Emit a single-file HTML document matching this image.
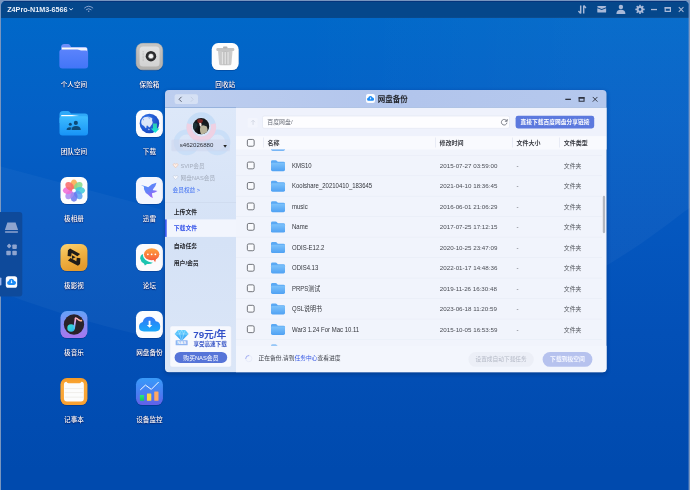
<!DOCTYPE html>
<html lang="zh-CN">
<head>
<meta charset="utf-8">
<title>Z4Pro-N1M3-6566</title>
<style>
*{box-sizing:border-box;margin:0;padding:0}
html,body{width:690px;height:490px;overflow:hidden;background:#7895bf;}
body{font-family:"Liberation Sans","Noto Sans CJK SC",sans-serif;font-size:6px;color:#333;position:relative}
#bg{position:absolute;left:1px;top:1px;width:688px;height:489px;border-radius:5px 5px 0 0;overflow:hidden;
 background:linear-gradient(180deg,#0068c9 3%,#0460c6 24%,#0457bf 46%,#0350b7 68%,#004aae 96%);}
#bg:after{content:'';position:absolute;left:0;right:0;bottom:0;height:.5px;background:rgba(120,150,200,.55)}
#bg:before{content:'';position:absolute;right:0;top:0;bottom:0;width:1px;background:rgba(120,150,200,.4);z-index:2}
#topbar{position:absolute;left:0;top:0;width:100%;height:16.5px;background:#05478b;border-top:.6px solid #06357c}
#shapes{position:absolute;left:0;top:0}
.t{position:absolute;white-space:nowrap;line-height:16px;height:16px}
#host{font-size:14.4px;font-weight:bold;color:#eaf0fa}
.lb{font-size:13.2px;font-weight:500;color:#fff;text-align:center;width:160px;text-shadow:0 0 2px rgba(0,20,90,.9),0 1px 2px rgba(0,20,90,.7)}
.hd{font-weight:bold;color:#3a3c43;font-size:12px}
.cell{color:#4a4d55;font-size:12.4px}
.nm{color:#33353b;font-size:12.6px;transform-origin:0 50%;transform:scaleX(.95)}
.ty{color:#55585f;font-size:11.8px}
.menu{font-weight:bold;color:#26282e;font-size:11.7px}

#txt{position:absolute;left:0;top:0;width:1380px;height:980px;transform:scale(.5);transform-origin:0 0}
</style>
</head>
<body>
<div id="bg"><div id="topbar"></div></div>
<svg id="shapes" width="690" height="490" viewBox="0 0 690 490">
<defs><filter id="blur1" x="-20%" y="-20%" width="140%" height="140%"><feGaussianBlur stdDeviation=".7"/></filter><filter id="blur4" x="-10%" y="-10%" width="120%" height="125%"><feGaussianBlur stdDeviation="2.2"/></filter></defs>
<path d="M-5 165 L165 210.5 L430 262 L430 338.4 L415 341.7 L400 344.5 L385 347.0 L370 349.0 L355 350.6 L340 351.9 L325 352.7 L310 353.2 L295 353.3 L280 353.1 L265 352.5 L250 351.5 L235 350.2 L220 348.6 L205 346.7 L190 344.4 L175 341.9 L160 339.0 L145 335.9 L130 332.4 L115 328.7 L100 324.8 L85 320.5 L70 316.0 L55 311.3 L40 306.3 L25 301.2 L10 295.7 L-5 290.1 Z" fill="#fff" opacity=".035"/>
<linearGradient id="bandg" gradientUnits="userSpaceOnUse" x1="300" y1="0" x2="600" y2="0"><stop offset="0" stop-color="#fff" stop-opacity="0"/><stop offset="1" stop-color="#fff" stop-opacity=".035"/></linearGradient>
<path d="M295 17 L695 17 L695 205 L685 211.0 L670 222.6 L655 233.6 L640 244.2 L625 254.1 L610 263.6 L595 272.5 L580 280.9 L565 288.8 L550 296.2 L535 303.1 L520 309.6 L505 315.5 L490 321.0 L475 326.0 L460 330.6 L445 334.7 L430 338.4 L415 341.7 L400 344.5 L385 347.0 L370 349.0 L355 350.6 L340 351.9 L325 352.7 L310 353.2 L295 353.3 Z" fill="url(#bandg)"/>
<g transform="translate(68.60 7.20) scale(0.5)"><path d="M1.5 2 L5 5.8 L8.5 2" fill="none" stroke="#dfe7f5" stroke-width="1.8"/></g>
<g transform="translate(84.00 5.30) scale(0.47)"><g fill="none" stroke="#8ea6d2" stroke-width="2" stroke-linecap="round"><path d="M1.2 5.6 Q10 -2 18.8 5.6"/><path d="M4.8 9.2 Q10 4.6 15.2 9.2"/></g><circle cx="10" cy="12.6" r="1.6" fill="#8ea6d2"/></g>
<g transform="translate(577.70 5.00) scale(0.5)"><g fill="none" stroke="#a9b9d8" stroke-width="2.9"><path d="M6 1 V17 M1.5 12 L6 17"/><path d="M12 17 V1 M12 1 L16.5 6"/></g></g>
<g transform="translate(597.30 6.00) scale(0.5)"><path transform="scale(.93 .82)" d="M0 1.5 Q0 0 1.5 0 H17.5 Q19 0 19 1.5 V3 L9.5 7.5 L0 3 Z M0 5.6 L9.5 10 L19 5.6 V14.5 Q19 16 17.5 16 H1.5 Q0 16 0 14.5 Z" fill="#a9b9d8"/></g>
<g transform="translate(616.40 4.70) scale(0.5)"><circle cx="9" cy="4.6" r="4.4" fill="#a9b9d8"/><path d="M0 18.4 Q0 10 9 10 Q18 10 18 18.4 Z" fill="#a9b9d8"/></g>
<g transform="translate(635.30 4.70) scale(0.47)"><g fill="#a9b9d8"><rect x="8.3" y="0" width="3.4" height="20" rx=".8" transform="rotate(0 10 10)"/><rect x="8.3" y="0" width="3.4" height="20" rx=".8" transform="rotate(45 10 10)"/><rect x="8.3" y="0" width="3.4" height="20" rx=".8" transform="rotate(90 10 10)"/><rect x="8.3" y="0" width="3.4" height="20" rx=".8" transform="rotate(135 10 10)"/><circle cx="10" cy="10" r="7"/></g><circle cx="10" cy="10" r="2.8" fill="#05478b"/></g>
<rect x="651" y="8.9" width="6" height="1.3" rx="0" fill="#a9b9d8" />
<path d="M665.2 7.9 H670.4 V11.3 H665.2 Z" fill="none" stroke="#a9b9d8" stroke-width="1.2"/><rect x="664.6" y="7" width="6.4" height="1.5" fill="#a9b9d8"/>
<g transform="translate(678.30 6.60) scale(0.47)"><path d="M1 1 L11 11 M11 1 L1 11" stroke="#a9b9d8" stroke-width="2.2"/></g>
<g transform="translate(59.35 44.10) scale(0.5)"><defs><linearGradient id="pf1" x1="0" y1="0" x2="0" y2="1"><stop offset="0" stop-color="#5b83fc"/><stop offset="1" stop-color="#4275f7"/></linearGradient>
<linearGradient id="pf2" x1="0" y1="0" x2="1" y2="0"><stop offset="0" stop-color="#fffdf2"/><stop offset="1" stop-color="#eaf0ff"/></linearGradient></defs>
<path d="M3.3 7 Q3.3 0 10 0 H17 Q20 0 21.5 2.5 L23.5 6 H51 Q56.5 6 56.5 11.5 V24 H3.3 Z" fill="#6d8ef9"/>
<path d="M5 7 H53 Q55.6 7 55.6 10 V22 H5 Z" fill="url(#pf2)"/>
<path d="M0 16 Q0 10.7 5 10.7 H36 Q38.5 10.7 40 11.8 Q41.2 12.7 43.5 12.7 H53 Q57.5 12.7 57.5 17 V43 Q57.5 48.8 51.5 48.8 H6 Q0 48.8 0 43 Z" fill="url(#pf1)"/></g>
<rect x="135.95" y="43.80" width="27" height="27" rx="6.5" fill="#00154a" opacity=".35" filter="url(#blur1)"/>
<g transform="translate(135.95 43.10) scale(0.5)"><defs><linearGradient id="sf1" x1="0" y1="0" x2="0" y2="1"><stop offset="0" stop-color="#c7c6c4"/><stop offset="1" stop-color="#b2b0ad"/></linearGradient>
<linearGradient id="sf2" x1="0" y1="0" x2="0" y2="1"><stop offset="0" stop-color="#e2e2e2"/><stop offset="1" stop-color="#d2d2d2"/></linearGradient></defs>
<rect x="0.5" y="0.5" width="53" height="53" rx="13" fill="url(#sf1)" stroke="#cdbfae" stroke-width="1"/>
<rect x="7.2" y="6.6" width="40" height="40" rx="7" fill="url(#sf2)"/>
<path d="M14.4 16.3 V36.6" stroke="#a6a6a6" stroke-width="1.4" stroke-dasharray="1.6 1.4"/>
<circle cx="30" cy="26.1" r="10.5" fill="#2b2b2d"/><circle cx="30" cy="26.1" r="5.4" fill="#9a9a9a"/><circle cx="30" cy="26.1" r="4.2" fill="#f6f6f6"/></g>
<rect x="211.70" y="43.80" width="27" height="27" rx="6.5" fill="#00154a" opacity=".35" filter="url(#blur1)"/>
<g transform="translate(211.70 43.10) scale(0.5)"><defs><linearGradient id="tr1" x1="0" y1="0" x2="1" y2="0"><stop offset="0" stop-color="#cfcfcf"/><stop offset=".5" stop-color="#bdbdbd"/><stop offset="1" stop-color="#cfcfcf"/></linearGradient></defs>
<rect x="0" y="0" width="54" height="54" rx="13" fill="#fdfdfd"/>
<path d="M12.4 15 H41.8 L39.4 42 Q39.1 44.4 36.6 44.4 H17.6 Q15.2 44.4 14.9 42 Z" fill="url(#tr1)"/>
<path d="M21.5 18 V42.5 M27.1 18 V42.5 M32.7 18 V42.5" stroke="#e2e2e2" stroke-width="2.6"/>
<rect x="9.2" y="9.8" width="36" height="6" rx="2.6" fill="#c4c4c4"/>
<rect x="22.6" y="6.8" width="9" height="4" rx="1.8" fill="#b4b4b4"/></g>
<g transform="translate(59.50 110.95) scale(0.5)"><defs><linearGradient id="tf1" x1="0" y1="0" x2="0" y2="1"><stop offset="0" stop-color="#3dbcff"/><stop offset="1" stop-color="#1793f6"/></linearGradient>
<linearGradient id="tf2" x1="0" y1="0" x2="1" y2="0"><stop offset="0" stop-color="#ffffff"/><stop offset=".6" stop-color="#ffffff"/><stop offset="1" stop-color="#ffffff" stop-opacity="0"/></linearGradient></defs>
<path d="M0 7 Q0 0 7 0 H16 Q19 0 20.5 2 L23 5.2 H51 Q57 5.2 57 11 V24 H0 Z" fill="#2fa9f8"/>
<rect x="3.3" y="8" width="36" height="3.4" rx="1" fill="url(#tf2)"/>
<path d="M0 15 Q0 10.6 4.5 10.6 H52.5 Q57 10.6 57 15 V43 Q57 49 51 49 H6 Q0 49 0 43 Z" fill="url(#tf1)"/>
<g fill="#0d4a78"><circle cx="32.7" cy="23.9" r="4.1"/><path d="M24 38 Q24 30 33 30 Q42.5 30 42.5 38 Z"/>
<circle cx="21.6" cy="26.8" r="3"/><path d="M14.2 38 Q14.2 32.4 20.5 32.4 Q23.3 32.4 24.6 33.4 Q22 35.3 22 38 Z"/></g></g>
<rect x="135.95" y="110.80" width="27" height="27" rx="6.5" fill="#00154a" opacity=".35" filter="url(#blur1)"/>
<g transform="translate(135.95 110.10) scale(0.5)"><defs><radialGradient id="dl1" cx=".35" cy=".35" r=".75"><stop offset="0" stop-color="#3f7ff0"/><stop offset=".6" stop-color="#2058d2"/><stop offset="1" stop-color="#1644b8"/></radialGradient>
<linearGradient id="dl2" x1="0" y1="0" x2="0" y2="1"><stop offset="0" stop-color="#2ec8ac"/><stop offset="1" stop-color="#10e8de"/></linearGradient></defs>
<rect x="0" y="0" width="54" height="54" rx="13" fill="#fbfcff"/>
<circle cx="27" cy="26.7" r="19.6" fill="url(#dl1)"/>
<path d="M10.5 25 Q10.5 18 16.5 14.5 Q21 12.5 26 13.5 Q31 14 33 17.5 Q31 19.5 32.8 22.5 Q34.5 25.5 32.2 28.5 Q30.5 30 29 33 Q27.3 35.8 25.5 33.8 Q24.5 30.5 21.8 30.8 Q20.3 33 21 35.5 Q19.3 37 18 34.5 Q16.5 31 13.5 30.5 Q10.8 28.8 10.5 25 Z" fill="#eef3fb" opacity=".9"/>
<path d="M14 17 Q17 18 16 21 Q13 21 14 17 Z M23 13.5 Q26 15.5 29.5 14 L28 17 Q25 17.5 23 13.5 Z" fill="#3a74e4" opacity=".55"/>
<path d="M24 37.5 Q26 36.5 27.5 38.5 Q27 41 25 40 Z" fill="#e8eef9" opacity=".8"/>
<path d="M34 27 H42 V36.9 H47.3 L38.4 45.7 L29.7 36.9 H34 Z" fill="url(#dl2)"/></g>
<rect x="60.45" y="177.80" width="27" height="27" rx="6.5" fill="#00154a" opacity=".35" filter="url(#blur1)"/>
<g transform="translate(60.45 177.10) scale(0.5)"><rect x="0" y="0" width="54" height="54" rx="13" fill="#fdfdfd"/><ellipse cx="27" cy="15" rx="7.1" ry="10.2" fill="#f9a94a" opacity=".86" transform="rotate(0 27 27)"/><ellipse cx="27" cy="15" rx="7.1" ry="10.2" fill="#84d98a" opacity=".86" transform="rotate(45 27 27)"/><ellipse cx="27" cy="15" rx="7.1" ry="10.2" fill="#3ecbd8" opacity=".86" transform="rotate(90 27 27)"/><ellipse cx="27" cy="15" rx="7.1" ry="10.2" fill="#58a2f2" opacity=".86" transform="rotate(135 27 27)"/><ellipse cx="27" cy="15" rx="7.1" ry="10.2" fill="#6a78f0" opacity=".86" transform="rotate(180 27 27)"/><ellipse cx="27" cy="15" rx="7.1" ry="10.2" fill="#a98af0" opacity=".86" transform="rotate(225 27 27)"/><ellipse cx="27" cy="15" rx="7.1" ry="10.2" fill="#f06ad6" opacity=".86" transform="rotate(270 27 27)"/><ellipse cx="27" cy="15" rx="7.1" ry="10.2" fill="#f86a68" opacity=".86" transform="rotate(315 27 27)"/><circle cx="27" cy="27" r="3.8" fill="#fff" opacity=".95"/></g>
<rect x="135.95" y="177.80" width="27" height="27" rx="6.5" fill="#00154a" opacity=".35" filter="url(#blur1)"/>
<g transform="translate(135.95 177.10) scale(0.5)"><defs><linearGradient id="xl1" x1="0.1" y1="0" x2=".8" y2="1"><stop offset="0" stop-color="#4a90fa"/><stop offset=".55" stop-color="#6880f8"/><stop offset="1" stop-color="#b05cf8"/></linearGradient></defs>
<rect x="0" y="0" width="54" height="54" rx="13" fill="#f4f6fe"/>
<path d="M10 16 L17.5 17.8 Q21 18.6 24.4 20.3 Q31 13.5 41 11.5 Q40 18 34.5 24 Q33.5 25.5 33.8 26.5 Q38 26.3 43 28 Q38 31.8 32 32.2 Q32.3 37 34 42 Q27.5 39.5 24 35 Q18.5 32.5 16.3 25 Q15.5 21.5 16.3 19.5 Z" fill="url(#xl1)"/></g>
<rect x="60.45" y="244.80" width="27" height="27" rx="6.5" fill="#00154a" opacity=".35" filter="url(#blur1)"/>
<g transform="translate(60.45 244.10) scale(0.5)"><defs><linearGradient id="vd1" x1="0" y1="0" x2=".35" y2="1"><stop offset="0" stop-color="#fad374"/><stop offset=".5" stop-color="#f1b445"/><stop offset="1" stop-color="#e59c2e"/></linearGradient></defs>
<rect x="0" y="0" width="54" height="54" rx="13" fill="url(#vd1)"/>
<g fill="#1f1c1a">
<path d="M15 12.4 L19.2 9 L39.2 19.6 L34 24.2 L22.4 18 L21.5 25 L14.3 23.8 Z"/>
<path d="M39.2 39.8 L35 43.2 L15 32.6 L20.2 28 L31.8 34.2 L32.7 27.2 L39.9 28.4 Z"/>
<path d="M23.1 22.2 L30.3 26.1 L23.1 30 Z"/>
</g></g>
<rect x="135.95" y="244.80" width="27" height="27" rx="6.5" fill="#00154a" opacity=".35" filter="url(#blur1)"/>
<g transform="translate(135.95 244.10) scale(0.5)"><defs><linearGradient id="fr1" x1="0" y1="0" x2="0" y2="1"><stop offset="0" stop-color="#ffa23e"/><stop offset="1" stop-color="#f75f3c"/></linearGradient></defs>
<rect x="0" y="0" width="54" height="54" rx="13" fill="#fbfbfd"/>
<path d="M13.3 19.6 Q7.6 23.5 8.6 29.5 Q9.8 36.5 16 38.6 L17.9 42.8 L22.2 39.6 Q28.5 40.4 34 37.4 Q29 37.2 24.5 35 Q17.5 31.5 15.6 27.5 Q14 24.5 14 21.2 Z" fill="#1cc4b0"/>
<ellipse cx="31.4" cy="20.3" rx="15.4" ry="11.8" fill="url(#fr1)"/>
<path d="M34.5 30.5 L38.4 36.2 L40.6 28.5 Z" fill="#f8633c"/>
<circle cx="23.8" cy="20.5" r="1.8" fill="#fff"/><circle cx="31.4" cy="20.5" r="1.8" fill="#fff"/><circle cx="38.8" cy="20.5" r="1.8" fill="#fff"/></g>
<rect x="60.45" y="311.80" width="27" height="27" rx="6.5" fill="#00154a" opacity=".35" filter="url(#blur1)"/>
<g transform="translate(60.45 311.10) scale(0.5)"><defs><linearGradient id="ms1" x1="0" y1="0" x2="0" y2="1"><stop offset="0" stop-color="#64a2f8"/><stop offset="1" stop-color="#a976ee"/></linearGradient>
<linearGradient id="ms2" x1="0" y1="1" x2="0" y2="0"><stop offset="0" stop-color="#48c4f4"/><stop offset=".5" stop-color="#c0a4f8"/><stop offset="1" stop-color="#ffb0c4"/></linearGradient>
<linearGradient id="ms3" x1="0" y1="0" x2="1" y2="0"><stop offset="0" stop-color="#ffb0c4"/><stop offset="1" stop-color="#ffb48e"/></linearGradient>
<linearGradient id="ms4" x1="0" y1="0" x2="1" y2="1"><stop offset="0" stop-color="#36e8cc"/><stop offset="1" stop-color="#2cb0f4"/></linearGradient></defs>
<rect x="0" y="0" width="54" height="54" rx="13" fill="url(#ms1)"/>
<circle cx="27.1" cy="26.8" r="20.3" fill="#2a2229"/>
<circle cx="21.2" cy="34" r="7.5" fill="url(#ms4)"/>
<path d="M27.4 34 L30.2 14.5" fill="none" stroke="url(#ms2)" stroke-width="3.4" stroke-linecap="round"/>
<path d="M30.2 14.5 Q33 13.5 35.5 17 Q38 20 42 19" fill="none" stroke="url(#ms3)" stroke-width="3.2" stroke-linecap="round"/></g>
<rect x="135.95" y="311.80" width="27" height="27" rx="6.5" fill="#00154a" opacity=".35" filter="url(#blur1)"/>
<g transform="translate(135.95 311.10) scale(0.5)"><defs><linearGradient id="cl1" x1="0" y1="0" x2="0" y2="1"><stop offset="0" stop-color="#3474f4"/><stop offset=".5" stop-color="#2490f8"/><stop offset="1" stop-color="#1aa8fa"/></linearGradient></defs>
<rect x="0" y="0" width="54" height="54" rx="13" fill="#fbfcff"/>
<path d="M16 40.8 Q6.1 40.8 6.1 31.5 Q6.1 24 13.5 22 Q15.5 11.4 27 11.4 Q36.5 11.4 39.5 20.5 Q48.6 21.5 48.6 31 Q48.6 40.8 39 40.8 Z" fill="url(#cl1)"/>
<path d="M25.4 19.2 H29 V27.7 H32.7 L27.3 33.2 L21.8 27.7 H25.4 Z" fill="#fff"/></g>
<rect x="60.45" y="378.80" width="27" height="27" rx="6.5" fill="#00154a" opacity=".35" filter="url(#blur1)"/>
<g transform="translate(60.45 378.10) scale(0.5)"><defs><linearGradient id="nt1" x1="0" y1="0" x2="0" y2="1"><stop offset="0" stop-color="#f59a26"/><stop offset=".3" stop-color="#fbaa3a"/><stop offset="1" stop-color="#f9a030"/></linearGradient></defs>
<rect x="0" y="0" width="54" height="54" rx="13" fill="url(#nt1)"/>
<path d="M7 13 Q7 7.5 12 7.5 Q13 10.2 16 10.2 H38 Q41 10.2 42 7.5 Q46.8 7.5 46.8 13 V40.7 Q46.8 46.7 41 46.7 H13 Q7 46.7 7 40.7 Z" fill="#fcfcfc"/>
<path d="M8.5 21 H45.3 M8.5 29 H45.3 M8.5 38 H45.3" stroke="#eceae6" stroke-width="1.5"/></g>
<rect x="135.95" y="378.80" width="27" height="27" rx="6.5" fill="#00154a" opacity=".35" filter="url(#blur1)"/>
<g transform="translate(135.95 378.10) scale(0.5)"><defs><linearGradient id="mn1" x1="0" y1="0" x2="0" y2="1"><stop offset="0" stop-color="#389af9"/><stop offset=".6" stop-color="#4a7cf2"/><stop offset="1" stop-color="#6460e8"/></linearGradient>
<linearGradient id="mn2" x1="0" y1="0" x2="0" y2="1"><stop offset="0" stop-color="#2ee87c"/><stop offset="1" stop-color="#12c862"/></linearGradient></defs>
<rect x="0" y="0" width="54" height="54" rx="13" fill="url(#mn1)"/>
<path d="M9.2 23.1 L19 14 L30.7 22.5 L44.8 8.4" fill="none" stroke="#fff" stroke-width="1.9" stroke-linejoin="round" stroke-linecap="round"/>
<rect x="7.8" y="33.6" width="8.5" height="11.8" rx="1" fill="url(#mn2)"/>
<rect x="22" y="31" width="8.7" height="14.4" rx="1" fill="#ffd63e"/>
<rect x="36.6" y="27" width="8.5" height="18.4" rx="1" fill="#ffa862"/></g>
<path d="M0 212 H19.3 Q22.3 212 22.3 215 V293.6 Q22.3 296.6 19.3 296.6 H0 Z" fill="#0e4a9b"/>
<g transform="translate(4.60 222.40) scale(0.55)"><path d="M5 0 H20 L24.5 14 H0.5 Z" fill="#8ea4cf"/><rect x="0.5" y="16" width="24" height="2.6" rx="1.2" fill="#8ea4cf"/></g>
<g transform="translate(5.80 244.20) scale(0.5)"><g fill="#8ea4cf"><rect x="3.2" y="0" width="7" height="7" rx="1.5" transform="rotate(45 6.7 3.5)"/><rect x="13" y="0.5" width="9" height="9" rx="1.8"/><rect x="1" y="13" width="9" height="9" rx="1.8"/><rect x="13" y="13" width="9" height="9" rx="1.8"/></g></g>
<rect x="0" y="277.5" width="1.4" height="8" rx="0.7" fill="#9db6ee" />
<g transform="translate(5.80 276.30) scale(0.2111111111111111)"><rect width="54" height="54" rx="12" fill="#fbfcff"/><path d="M16 40.8 Q6.1 40.8 6.1 31.5 Q6.1 24 13.5 22 Q15.5 11.4 27 11.4 Q36.5 11.4 39.5 20.5 Q48.6 21.5 48.6 31 Q48.6 40.8 39 40.8 Z" fill="#1c8cf6"/><path d="M25.4 19.2 H29 V27.7 H32.7 L27.3 33.2 L21.8 27.7 H25.4 Z" fill="#fff"/></g>
<rect x="165" y="91.5" width="441.5" height="282.3" rx="4" fill="#001a50" opacity=".38" filter="url(#blur4)"/>
<clipPath id="dclip"><rect x="165" y="90" width="441.5" height="282.3" rx="4"/></clipPath>
<g clip-path="url(#dclip)">
<linearGradient id="sideg" x1="0" y1="0" x2="0" y2="1"><stop offset="0" stop-color="#dde8f9"/><stop offset=".5" stop-color="#d5e2f6"/><stop offset="1" stop-color="#dbe6f7"/></linearGradient>
<linearGradient id="titleg" x1="0" y1="0" x2="1" y2="0"><stop offset="0" stop-color="#bdceef"/><stop offset=".55" stop-color="#b2c5ec"/><stop offset="1" stop-color="#b5c8ed"/></linearGradient>
<rect x="165" y="107.7" width="71" height="265" rx="0" fill="url(#sideg)" />
<rect x="236" y="107.7" width="371" height="265" rx="0" fill="#f1f4fc" />
<rect x="165" y="90" width="442" height="17.7" rx="0" fill="url(#titleg)" />
<rect x="174.6" y="94.3" width="23.4" height="9.8" rx="2" fill="#d5e0f4" />
<g transform="translate(178.30 96.30) scale(0.5)"><path d="M6.5 1 L1.5 6 L6.5 11" fill="none" stroke="#4a5060" stroke-width="1.8"/></g>
<g transform="translate(190.00 96.30) scale(0.5)"><path d="M1.5 1 L6.5 6 L1.5 11" fill="none" stroke="#c3cde2" stroke-width="1.8"/></g>
<g transform="translate(366.00 94.00) scale(0.16666666666666666)"><rect width="54" height="54" rx="12" fill="#fbfcff"/><path d="M16 40.8 Q6.1 40.8 6.1 31.5 Q6.1 24 13.5 22 Q15.5 11.4 27 11.4 Q36.5 11.4 39.5 20.5 Q48.6 21.5 48.6 31 Q48.6 40.8 39 40.8 Z" fill="#1c8cf6"/><path d="M25.4 19.2 H29 V27.7 H32.7 L27.3 33.2 L21.8 27.7 H25.4 Z" fill="#fff"/></g>
<rect x="565.3" y="98.7" width="5.6" height="1.3" rx="0" fill="#2e3340" />
<path d="M579.15 98 H584.05 V101.2 H579.15 Z" fill="none" stroke="#2e3340" stroke-width="1.1"/><rect x="578.6" y="97" width="6" height="1.5" fill="#2e3340"/>
<g transform="translate(592.30 96.50) scale(0.4666666666666666)"><path d="M1 1 L11 11 M11 1 L1 11" stroke="#2e3340" stroke-width="2"/></g>
<g transform="translate(0.00 0.00)"><circle cx="186.6" cy="142.3" r="10.4" fill="none" stroke="#c8def7" stroke-width="5" opacity=".9"/>
<circle cx="217.5" cy="142.3" r="10.4" fill="none" stroke="#c8def7" stroke-width="5" opacity=".9"/>
<circle cx="201.3" cy="127" r="12.2" fill="none" stroke="#c6ddf7" stroke-width="5.2"/>
<path d="M189.52 123.84 A12.2 12.2 0 1 0 213.08 123.84" fill="none" stroke="#efd1e3" stroke-width="5.2"/></g>
<g transform="translate(192.70 117.80) scale(0.49411764705882355)"><defs><clipPath id="avc"><circle cx="17" cy="17" r="16.6"/></clipPath></defs>
<g clip-path="url(#avc)"><rect width="34" height="34" fill="#14181c"/><path d="M0 10 Q6 8 10 14 Q8 22 2 26 Z" fill="#1c3238"/><path d="M9 4 Q14 1 20 3.5 Q22 8 17 11 Q12 12 10 9 Z" fill="#7a2624"/><path d="M13 10.5 Q16 9.5 18 12 Q18.5 16 16.5 18 Q13.5 17 13 10.5 Z" fill="#f4e4e0"/><path d="M16 17 Q22 13 28 17 Q32 24 28 31 Q22 35 17 33 Q13 26 16 17 Z" fill="#b9b39a"/><path d="M12 18 Q15 22 14 33 L10 32 Q9 24 12 18 Z" fill="#0c0e10"/><path d="M19 12 Q26 10 30 14 L27 17 Q22 14 19 15 Z" fill="#1a2226"/></g></g>
<rect x="171.4" y="139.6" width="58.6" height="11.6" rx="1.5" fill="#cdd6ec" opacity=".55"/>
<g transform="translate(223.30 145.00) scale(0.45)"><path d="M0 0 H8 L4 6 Z" fill="#222"/></g>
<g transform="translate(172.90 163.30) scale(0.45)"><path d="M6 10 L1.2 5 Q-.2 2.6 1.6 1.2 Q3.8 -.2 6 2.2 Q8.2 -.2 10.4 1.2 Q12.2 2.6 10.8 5 Z" fill="#fdeee6" stroke="#e6bca8" stroke-width="1.2"/></g>
<g transform="translate(172.90 175.20) scale(0.45)"><path d="M6 10 L1.2 5 Q-.2 2.6 1.6 1.2 Q3.8 -.2 6 2.2 Q8.2 -.2 10.4 1.2 Q12.2 2.6 10.8 5 Z" fill="#f6f8fd" stroke="#bcc6d8" stroke-width="1.2"/></g>
<rect x="165" y="202.2" width="71" height="0.6" rx="0" fill="#cbd7ec" />
<rect x="165" y="219.4" width="71.2" height="17.5" rx="0" fill="#f2f5fd" />
<rect x="165" y="219.4" width="1.7" height="17.5" rx="0" fill="#3c58f0" />
<rect x="170" y="326" width="61.4" height="41" rx="2" fill="#f7f9fe" stroke="#d4def2" stroke-width=".4"/>
<g transform="translate(174.40 329.50) scale(0.5)"><defs><linearGradient id="dm1" x1="0" y1="0" x2="0" y2="1"><stop offset="0" stop-color="#5fd0ff"/><stop offset="1" stop-color="#2f9df4"/></linearGradient></defs>
<path d="M7 1 H22 L28.5 9 L14.5 23 L0.5 9 Z" fill="url(#dm1)"/>
<path d="M0.5 9 H28.5 M7 1 L10.5 9 L14.5 23 L18.5 9 L22 1 M14.5 1 L10.5 9 M14.5 1 L18.5 9" fill="none" stroke="#c8eeff" stroke-width=".9"/>
<rect x="2.5" y="21.5" width="24" height="10" rx="1" fill="#8fb6f2"/>
<text x="14.5" y="29.6" font-size="8.5" font-weight="bold" text-anchor="middle" fill="#fff" font-family="Liberation Sans, sans-serif">NAS</text></g>
<rect x="174.6" y="352" width="52.6" height="10.9" rx="5.45" fill="#5674d8" />
<rect x="236" y="107.7" width="371" height="28.4" rx="0" fill="#eff2fc" />
<rect x="247.6" y="118" width="10.1" height="9.5" rx="1.5" fill="#f3f5fd" />
<g transform="translate(250.70 119.60) scale(0.43)"><path d="M5.5 12.5 V1.5 M1 6 L5.5 1.5 L10 6" fill="none" stroke="#cbd1de" stroke-width="1.6"/></g>
<rect x="262.5" y="116" width="247" height="12.3" rx="1.6" fill="#fdfdff" stroke="#dfe4f0" stroke-width=".6"/>
<g transform="translate(500.40 118.40) scale(0.5)"><path d="M12.6 5.2 A5.6 5.6 0 1 0 13.1 8.6" fill="none" stroke="#5a5e68" stroke-width="1.5"/><path d="M13.6 1.2 V5.8 H9" fill="none" stroke="#5a5e68" stroke-width="1.5"/></g>
<rect x="515.6" y="115.8" width="78.6" height="12.6" rx="2.4" fill="#5c79de" />
<rect x="236" y="136.1" width="371" height="13.4" rx="0" fill="#f9fafe" />
<rect x="247.35" y="139.45" width="6.8" height="6.8" rx="1.4" fill="#fafbfe" stroke="#63666d" stroke-width=".9"/>
<rect x="263" y="137.5" width="0.6" height="10" rx="0" fill="#dde2ee" />
<rect x="435" y="137.5" width="0.6" height="10" rx="0" fill="#dde2ee" />
<rect x="512" y="137.5" width="0.6" height="10" rx="0" fill="#dde2ee" />
<rect x="559" y="137.5" width="0.6" height="10" rx="0" fill="#dde2ee" />
<defs><linearGradient id="fdg" x1="0" y1="0" x2="0" y2="1"><stop offset="0" stop-color="#7cc2fb"/><stop offset="1" stop-color="#4fa1f3"/></linearGradient><g id="fold"><path d="M0 3 Q0 0 3 0 H9 Q11 0 12 1.5 L13.5 3.5 H25 Q28 3.5 28 6.5 V12 H0 Z" fill="#5aa9f4"/><path d="M0 7.5 Q0 5.5 2 5.5 H26 Q28 5.5 28 7.5 V20 Q28 23 25 23 H3 Q0 23 0 20 Z" fill="url(#fdg)"/></g></defs>
<clipPath id="rclip"><rect x="236" y="149.5" width="371" height="196.3"/></clipPath><g clip-path="url(#rclip)">
<use href="#fold" transform="translate(271 139.73) scale(.5 .478)"/>
<rect x="236" y="154.96499999999997" width="366" height="0.6" rx="0" fill="#e8ecf6" />
<rect x="247.35" y="162.05" width="6.8" height="6.8" rx="1.4" fill="#fafbfe" stroke="#63666d" stroke-width=".9"/>
<use href="#fold" transform="translate(271 160.20) scale(.5 .478)"/>
<rect x="236" y="175.44" width="366" height="0.6" rx="0" fill="#e8ecf6" />
<rect x="247.35" y="182.52" width="6.8" height="6.8" rx="1.4" fill="#fafbfe" stroke="#63666d" stroke-width=".9"/>
<use href="#fold" transform="translate(271 180.67) scale(.5 .478)"/>
<rect x="236" y="195.9" width="366" height="0.6" rx="0" fill="#e8ecf6" />
<rect x="247.35" y="202.99" width="6.8" height="6.8" rx="1.4" fill="#fafbfe" stroke="#63666d" stroke-width=".9"/>
<use href="#fold" transform="translate(271 201.14) scale(.5 .478)"/>
<rect x="236" y="216.38" width="366" height="0.6" rx="0" fill="#e8ecf6" />
<rect x="247.35" y="223.46" width="6.8" height="6.8" rx="1.4" fill="#fafbfe" stroke="#63666d" stroke-width=".9"/>
<use href="#fold" transform="translate(271 221.61) scale(.5 .478)"/>
<rect x="236" y="236.84" width="366" height="0.6" rx="0" fill="#e8ecf6" />
<rect x="247.35" y="243.93" width="6.8" height="6.8" rx="1.4" fill="#fafbfe" stroke="#63666d" stroke-width=".9"/>
<use href="#fold" transform="translate(271 242.08) scale(.5 .478)"/>
<rect x="236" y="257.31" width="366" height="0.6" rx="0" fill="#e8ecf6" />
<rect x="247.35" y="264.40" width="6.8" height="6.8" rx="1.4" fill="#fafbfe" stroke="#63666d" stroke-width=".9"/>
<use href="#fold" transform="translate(271 262.55) scale(.5 .478)"/>
<rect x="236" y="277.78" width="366" height="0.6" rx="0" fill="#e8ecf6" />
<rect x="247.35" y="284.87" width="6.8" height="6.8" rx="1.4" fill="#fafbfe" stroke="#63666d" stroke-width=".9"/>
<use href="#fold" transform="translate(271 283.02) scale(.5 .478)"/>
<rect x="236" y="298.25" width="366" height="0.6" rx="0" fill="#e8ecf6" />
<rect x="247.35" y="305.34" width="6.8" height="6.8" rx="1.4" fill="#fafbfe" stroke="#63666d" stroke-width=".9"/>
<use href="#fold" transform="translate(271 303.49) scale(.5 .478)"/>
<rect x="236" y="318.73" width="366" height="0.6" rx="0" fill="#e8ecf6" />
<rect x="247.35" y="325.81" width="6.8" height="6.8" rx="1.4" fill="#fafbfe" stroke="#63666d" stroke-width=".9"/>
<use href="#fold" transform="translate(271 323.96) scale(.5 .478)"/>
<rect x="236" y="339.19" width="366" height="0.6" rx="0" fill="#e8ecf6" />
<use href="#fold" transform="translate(271 344.43) scale(.5 .478)"/>
</g>
<rect x="602.8" y="195.8" width="2.3" height="37.4" rx="1.15" fill="#b3b7c0" />
<rect x="236" y="345.8" width="371" height="27" rx="0" fill="#f3f6fd" />
<g transform="translate(245.00 354.80) scale(0.475)"><circle cx="8" cy="8" r="6.6" fill="none" stroke="#e4e8f8" stroke-width="1.6"/><path d="M1.4 8 A6.6 6.6 0 0 1 8 1.4" fill="none" stroke="#8f9cf0" stroke-width="1.6" stroke-linecap="round"/></g>
<rect x="468.4" y="352" width="65.4" height="14.8" rx="7.4" fill="#eceff7" />
<rect x="542.6" y="352" width="49.8" height="14.8" rx="7.4" fill="#b6c2ee" />
</g>
</svg>
<div id="txt">
<div class="t " id="host" style="left:14.4px;top:10.2px;">Z4Pro-N1M3-6566</div>
<div class="t lb" style="left:67.9px;top:162.2px">个人空间</div>
<div class="t lb" style="left:218.9px;top:162.2px">保险箱</div>
<div class="t lb" style="left:370.4px;top:162.2px">回收站</div>
<div class="t lb" style="left:67.9px;top:296.2px">团队空间</div>
<div class="t lb" style="left:218.9px;top:296.2px">下载</div>
<div class="t lb" style="left:67.9px;top:430.2px">极相册</div>
<div class="t lb" style="left:218.9px;top:430.2px">迅雷</div>
<div class="t lb" style="left:67.9px;top:564.2px">极影视</div>
<div class="t lb" style="left:218.9px;top:564.2px">论坛</div>
<div class="t lb" style="left:67.9px;top:698.2px">极音乐</div>
<div class="t lb" style="left:218.9px;top:698.2px">网盘备份</div>
<div class="t lb" style="left:67.9px;top:832.2px">记事本</div>
<div class="t lb" style="left:218.9px;top:832.2px">设备监控</div>
<div class="t " style="left:755.6px;top:190.4px;font-size:15px;font-weight:bold;color:#23252b">网盘备份</div>
<div class="t " style="left:359.6px;top:281.4px;font-size:12.2px;color:#2c2f36">s462026880</div>
<div class="t " style="left:361.2px;top:323.4px;font-size:11.2px;color:#a3acbc">SVIP会员</div>
<div class="t " style="left:361.2px;top:347.2px;font-size:11.4px;color:#a3acbc">网盘NAS会员</div>
<div class="t " style="left:345px;top:371.2px;font-size:11.4px;color:#3b6cf2">会员权益 &gt;</div>
<div class="t menu" style="left:347.4px;top:415.2px;">上传文件</div>
<div class="t menu" style="left:347.4px;top:448.2px;color:#3553e8">下载文件</div>
<div class="t menu" style="left:347.4px;top:483.6px;">自动任务</div>
<div class="t menu" style="left:347.4px;top:517.6px;">用户/会员</div>
<div class="t " style="left:386.4px;top:661.2px;font-size:19.6px;font-weight:bold;color:#3250c8;line-height:20px;height:20px;top:659.2px">79元/年</div>
<div class="t " style="left:386.8px;top:679.2px;font-size:11.1px;font-weight:bold;color:#3553c6">享受高速下载</div>
<div class="t " style="left:349.2px;top:707px;width:105.2px;text-align:center;font-size:11.6px;color:#fff">购买NAS会员</div>
<div class="t " style="left:534.6px;top:235.2px;font-size:11.8px;color:#6a6e78">百度网盘/</div>
<div class="t " style="left:1031.2px;top:236.4px;width:157.2px;text-align:center;font-size:11.5px;color:#fff;font-weight:bold">直接下载百度网盘分享链接</div>
<div class="t hd" style="left:535.2px;top:277.2px;">名称</div>
<div class="t hd" style="left:879.2px;top:277.2px;">修改时间</div>
<div class="t hd" style="left:1032.8px;top:277.2px;">文件大小</div>
<div class="t hd" style="left:1127.6px;top:277.2px;">文件类型</div>
<div class="t nm" style="left:584px;top:323.4px;">KMS10</div>
<div class="t cell" style="left:879.6px;top:323.4px;">2015-07-27 03:59:00</div>
<div class="t cell" style="left:1033.2px;top:323.4px;">-</div>
<div class="t ty" style="left:1127.6px;top:323.2px;">文件夹</div>
<div class="t nm" style="left:584px;top:364.34px;">Koolshare_20210410_183645</div>
<div class="t cell" style="left:879.6px;top:364.34px;">2021-04-10 18:36:45</div>
<div class="t cell" style="left:1033.2px;top:364.34px;">-</div>
<div class="t ty" style="left:1127.6px;top:364.14px;">文件夹</div>
<div class="t nm" style="left:584px;top:405.28px;">music</div>
<div class="t cell" style="left:879.6px;top:405.28px;">2016-06-01 21:06:29</div>
<div class="t cell" style="left:1033.2px;top:405.28px;">-</div>
<div class="t ty" style="left:1127.6px;top:405.08px;">文件夹</div>
<div class="t nm" style="left:584px;top:446.22px;">Name</div>
<div class="t cell" style="left:879.6px;top:446.22px;">2017-07-25 17:12:15</div>
<div class="t cell" style="left:1033.2px;top:446.22px;">-</div>
<div class="t ty" style="left:1127.6px;top:446.02px;">文件夹</div>
<div class="t nm" style="left:584px;top:487.16px;">ODIS-E12.2</div>
<div class="t cell" style="left:879.6px;top:487.16px;">2020-10-25 23:47:09</div>
<div class="t cell" style="left:1033.2px;top:487.16px;">-</div>
<div class="t ty" style="left:1127.6px;top:486.96px;">文件夹</div>
<div class="t nm" style="left:584px;top:528.1px;">ODIS4.13</div>
<div class="t cell" style="left:879.6px;top:528.1px;">2022-01-17 14:48:36</div>
<div class="t cell" style="left:1033.2px;top:528.1px;">-</div>
<div class="t ty" style="left:1127.6px;top:527.9px;">文件夹</div>
<div class="t nm" style="left:584px;top:569.04px;">PRPS测试</div>
<div class="t cell" style="left:879.6px;top:569.04px;">2019-11-26 16:30:48</div>
<div class="t cell" style="left:1033.2px;top:569.04px;">-</div>
<div class="t ty" style="left:1127.6px;top:568.84px;">文件夹</div>
<div class="t nm" style="left:584px;top:609.98px;">QSL说明书</div>
<div class="t cell" style="left:879.6px;top:609.98px;">2023-06-18 11:20:59</div>
<div class="t cell" style="left:1033.2px;top:609.98px;">-</div>
<div class="t ty" style="left:1127.6px;top:609.78px;">文件夹</div>
<div class="t nm" style="left:584px;top:650.92px;">War3 1.24 For Mac 10.11</div>
<div class="t cell" style="left:879.6px;top:650.92px;">2015-10-05 16:53:59</div>
<div class="t cell" style="left:1033.2px;top:650.92px;">-</div>
<div class="t ty" style="left:1127.6px;top:650.72px;">文件夹</div>
<div class="t " style="left:516.8px;top:707.8px;font-size:11.5px;color:#3a3d45">正在备份,请到<span style="color:#3356e4">任务中心</span>查看进度</div>
<div class="t " style="left:936.8px;top:709.2px;width:130.8px;text-align:center;font-size:11.4px;color:#b4b9c6">设置成自动下载任务</div>
<div class="t " style="left:1085.2px;top:709.8px;width:99.6px;text-align:center;font-size:11.6px;color:#f4f6ff;font-weight:bold">下载到极空间</div>
</div>
</body>
</html>
